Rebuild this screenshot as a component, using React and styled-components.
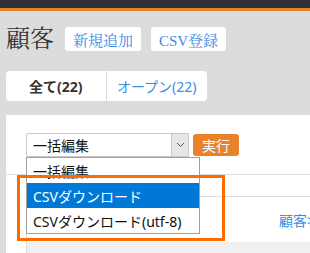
import React from "react";
import styled, { createGlobalStyle } from "styled-components";

const SANS = `"Noto Sans", "Noto Sans CJK JP", sans-serif`;
const SERIF = `"Liberation Serif", "Noto Serif CJK JP", "Noto Sans CJK JP", serif`;

const GlobalStyle = createGlobalStyle`
  html, body {
    margin: 0;
    background: #dcdcdc;
    overflow: hidden;
  }
`;

const TopBar = styled.div`
  height: 8px;
  background: #30303a;
  border-bottom: 3px solid #e8822a;
`;

const Header = styled.div`
  display: flex;
  align-items: center;
  padding: 16px 0 0 6px;
  height: 24px;
`;

const Title = styled.h1`
  margin: 0 11px 0 0;
  font-family: ${SERIF};
  font-weight: normal;
  font-size: 24px;
  line-height: 24px;
  color: #333;
`;

const HeaderButton = styled.button`
  height: 24px;
  width: ${({ $w }) => $w}px;
  margin-right: 10px;
  padding: 0;
  border: none;
  border-radius: 3px;
  background: #fff;
  color: #3a8ee6;
  font-family: ${SERIF};
  font-size: 15px;
`;

const Tabs = styled.div`
  display: flex;
  width: 201px;
  height: 30px;
  margin: 20px 0 0 6px;
  background: #fff;
  border-radius: 4px;
`;

const Tab = styled.div`
  display: flex;
  align-items: center;
  justify-content: center;
  width: ${({ $w }) => $w}px;
  font-family: ${SANS};
  font-size: 14px;
  font-weight: ${({ $active }) => ($active ? 700 : 400)};
  color: ${({ $active }) => ($active ? "#333" : "#3a8ee6")};
  & + & {
    border-left: 1px solid #dcdcdc;
  }
`;

const Panel = styled.div`
  position: relative;
  margin: 14px 0 0 6px;
  background: #fff;
  height: 138px;
  overflow: hidden;
`;

const ActionRow = styled.div`
  display: flex;
  align-items: center;
  gap: 4px;
  padding: 18px 0 0 20px;
  height: 24px;
`;

const SelectWrap = styled.div`
  position: relative;
`;

const Select = styled.div`
  display: flex;
  width: 163px;
  height: 24px;
  box-sizing: border-box;
  border: 1px solid #c8c8c8;
  border-radius: 2px 0 0 2px;
  font-family: ${SANS};
  font-size: 14px;
  color: #111;
`;

const SelectValue = styled.div`
  flex: 1;
  display: flex;
  align-items: center;
  padding-left: 6px;
`;

const SelectArrow = styled.div`
  width: 16px;
  display: flex;
  align-items: center;
  justify-content: center;
  background: #e6e6e6;
  border-left: 1px solid #c8c8c8;
`;

const DropList = styled.ul`
  position: absolute;
  top: 24px;
  left: 0;
  width: 174px;
  margin: 0;
  padding: 0;
  list-style: none;
  background: #fff;
  border: 1px solid #a0a0a0;
  box-sizing: border-box;
  z-index: 2;
`;

const DropItem = styled.li`
  height: 25px;
  display: flex;
  align-items: center;
  padding-left: 6px;
  font-family: ${SANS};
  font-size: 14px;
  background: ${({ $selected }) => ($selected ? "#0078d7" : "transparent")};
  color: ${({ $selected }) => ($selected ? "#fff" : "#111")};
`;

const RunButton = styled.button`
  width: 46px;
  height: 22px;
  padding: 0;
  border: none;
  border-radius: 3px;
  background: #e8822a;
  color: #fff;
  font-family: ${SANS};
  font-size: 14px;
`;

const Divider = styled.div`
  margin-top: 17px;
  border-top: 1px solid #dddddd;
`;

const Table = styled.div`
  margin-left: 20px;
  border-left: 1px solid #dddddd;
`;

const TableHead = styled.div`
  height: 21px;
  border-bottom: 1px solid #dddddd;
`;

const TableRow = styled.div`
  display: grid;
  grid-template-columns: 252px 1fr;
  align-items: center;
  height: 45px;
  background: ${({ $muted }) => ($muted ? "#f0f0f0" : "#fff")};
`;

const RowLink = styled.a`
  font-family: ${SANS};
  font-size: 14px;
  color: #3a8ee6;
  white-space: nowrap;
`;

const Annotation = styled.div`
  position: absolute;
  left: 11px;
  top: 60px;
  width: 208px;
  height: 66px;
  box-sizing: border-box;
  border: 3px solid #ff6a00;
  z-index: 3;
  pointer-events: none;
`;

const BULK_OPTIONS = ["一括編集", "CSVダウンロード", "CSVダウンロード(utf-8)"];

export default function App() {
  return (
    <>
      <GlobalStyle />
      <TopBar />
      <Header>
        <Title>顧客</Title>
        <HeaderButton $w={76}>新規追加</HeaderButton>
        <HeaderButton $w={75}>CSV登録</HeaderButton>
      </Header>
      <Tabs>
        <Tab $active $w={100}>全て(22)</Tab>
        <Tab $w={101}>オープン(22)</Tab>
      </Tabs>
      <Panel>
        <ActionRow>
          <SelectWrap>
            <Select>
              <SelectValue>一括編集</SelectValue>
              <SelectArrow>
                <svg width="9" height="6" viewBox="0 0 9 6">
                  <path d="M1 1l3.5 3.5L8 1" fill="none" stroke="#555" strokeWidth="1" />
                </svg>
              </SelectArrow>
            </Select>
            <DropList>
              {BULK_OPTIONS.map((opt, i) => (
                <DropItem key={opt} $selected={i === 1}>
                  {opt}
                </DropItem>
              ))}
            </DropList>
          </SelectWrap>
          <RunButton>実行</RunButton>
        </ActionRow>
        <Divider />
        <Table>
          <TableHead />
          <TableRow>
            <span />
            <RowLink>顧客&gt;</RowLink>
          </TableRow>
          <TableRow $muted />
        </Table>
        <Annotation />
      </Panel>
    </>
  );
}
